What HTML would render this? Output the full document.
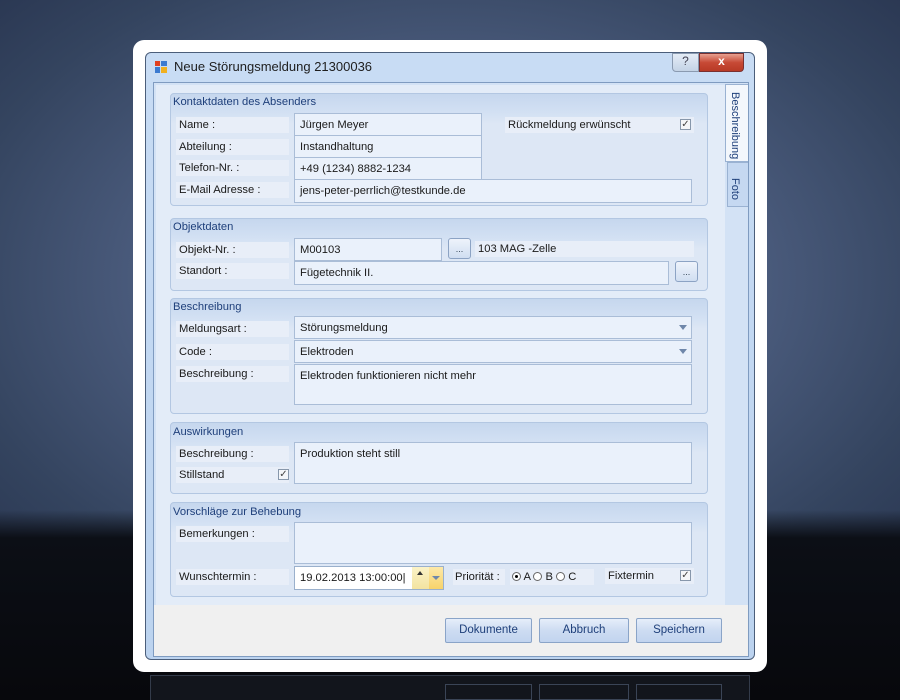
<!DOCTYPE html>
<html><head><meta charset="utf-8"><style>
*{box-sizing:border-box;margin:0;padding:0}
body{width:900px;height:700px;overflow:hidden;position:relative;font-family:"Liberation Sans","DejaVu Sans",sans-serif;font-size:11.2px;color:#1a1a1a;
background:radial-gradient(ellipse 70% 60% at 50% 40%,#6f82a5 0%,#4d5e80 45%,#34445f 80%,#2a3752 100%)}
.floor{position:absolute;left:0;top:510px;width:900px;height:190px;background:linear-gradient(rgba(20,26,38,0),#0c0f16 28px,#07080c)}
.a{position:absolute}
.card{left:133px;top:40px;width:634px;height:632px;background:#fff;border-radius:11px}
.win{left:145px;top:52px;width:610px;height:608px;background:linear-gradient(#c8dcf4,#bcd3ef);border:1px solid #4b5e7a;border-radius:6px}
.title{left:174px;top:59px;font-size:13px;color:#1e1e1e}
.client{left:153px;top:82px;width:596px;height:575px;border:1px solid #7f9bc0;background:#f0f0f0}
.tabarea{left:154px;top:83px;width:594px;height:522px;background:#d3e2f5}
.content{left:156px;top:85px;width:569px;height:520px;background:#e3ecf8}
.grp{position:absolute;left:170px;width:538px;background:linear-gradient(#c6d7ee,#d2e0f3 18px,#dde7f5 30px);border:1px solid #b3c7e2;border-radius:4px}
.gt{position:absolute;left:173px;color:#1e3f7a;font-size:11.2px}
.lb{position:absolute;left:176px;width:113px;height:16px;background:#e8eef8;padding:2px 0 0 3px}
.f{position:absolute;background:#eaf1fb;border:1px solid #aabdd7;padding:5px 0 0 5px}
.fw{background:#fff}
.chk{position:absolute;width:11px;height:11px;border:1px solid #8797ab;background:#f4f6f9;font-size:10px;line-height:9px;text-align:center;color:#444}
.dd{position:absolute;right:4px;top:8px;width:0;height:0;border-left:4px solid transparent;border-right:4px solid transparent;border-top:5px solid #6f87aa}
.btn{position:absolute;top:618px;height:25px;border:1px solid #8aa4c8;border-radius:2px;background:linear-gradient(#e6eefa,#cddcf2 50%,#c2d4ef);color:#1e3f7a;font-size:11.5px;text-align:center;line-height:23px}
.sb{position:absolute;width:23px;height:21px;border:1px solid #8ca3c4;border-radius:3px;background:linear-gradient(#eef3fb,#d0def1);text-align:center;font-size:9px;line-height:20px;color:#345}
.rd{display:inline-block;width:9px;height:9px;border:1px solid #666;border-radius:50%;vertical-align:-1px;background:#fff;position:relative}
</style></head><body>
<div class="floor"></div>
<div class="a" style="left:150px;top:675px;width:600px;height:25px;border:1px solid #333b4a;border-bottom:none;background:#12151c"></div>
<div class="a" style="left:445px;top:684px;width:87px;height:16px;border:1px solid #3a4456"></div>
<div class="a" style="left:539px;top:684px;width:90px;height:16px;border:1px solid #3a4456"></div>
<div class="a" style="left:636px;top:684px;width:86px;height:16px;border:1px solid #3a4456"></div>
<div class="a card"></div>
<div class="a win"></div>
<div class="a" style="left:155px;top:61px;width:5px;height:5px;background:#e04020"></div>
<div class="a" style="left:161px;top:61px;width:6px;height:5px;background:#3b7ad0"></div>
<div class="a" style="left:155px;top:67px;width:5px;height:6px;background:#3b7ad0"></div>
<div class="a" style="left:161px;top:67px;width:6px;height:6px;background:#f0b020"></div>
<div class="a title">Neue Störungsmeldung 21300036</div>
<div class="a" style="left:672px;top:53px;width:27px;height:19px;border:1px solid #8a9ab0;border-radius:0 0 0 4px;background:linear-gradient(#e4ecf6,#c4d3e6);text-align:center;font-size:12px;color:#445">?</div>
<div class="a" style="left:699px;top:53px;width:45px;height:19px;border:1px solid #7a3030;border-radius:0 0 4px 0;background:linear-gradient(#e8a090,#c74a36 50%,#b83a26);text-align:center;font-size:12px;font-weight:bold;color:#fff">x</div>
<div class="a client"></div>
<div class="a tabarea"></div>
<div class="a content"></div>
<div class="a" style="left:725px;top:84px;width:23px;height:78px;background:#f3f7fc;border:1px solid #9ab2d2;border-right:none"></div>
<div class="a" style="left:727px;top:162px;width:21px;height:45px;background:#c5d8f1;border:1px solid #9ab2d2;border-right:none"></div>
<div class="a" style="left:729px;top:92px;writing-mode:vertical-rl;color:#1e3f7a;font-size:11px">Beschreibung</div>
<div class="a" style="left:729px;top:178px;writing-mode:vertical-rl;color:#1e3f7a;font-size:11px">Foto</div>

<div class="grp" style="top:93px;height:113px"></div>
<div class="gt" style="top:96px">Kontaktdaten des Absenders</div>
<div class="lb" style="top:117px">Name :</div>
<div class="lb" style="top:139px">Abteilung :</div>
<div class="lb" style="top:160px">Telefon-Nr. :</div>
<div class="lb" style="top:182px">E-Mail Adresse :</div>
<div class="f" style="left:294px;top:113px;width:188px;height:23px">Jürgen Meyer</div>
<div class="f" style="left:294px;top:135px;width:188px;height:23px">Instandhaltung</div>
<div class="f" style="left:294px;top:157px;width:188px;height:23px">+49 (1234) 8882-1234</div>
<div class="f" style="left:294px;top:179px;width:398px;height:24px">jens-peter-perrlich@testkunde.de</div>
<div class="lb" style="left:505px;top:117px;width:189px">Rückmeldung erwünscht</div>
<div class="chk" style="left:680px;top:119px">✓</div>

<div class="grp" style="top:218px;height:73px"></div>
<div class="gt" style="top:221px">Objektdaten</div>
<div class="lb" style="top:242px">Objekt-Nr. :</div>
<div class="lb" style="top:263px">Standort :</div>
<div class="f" style="left:294px;top:238px;width:148px;height:23px">M00103</div>
<div class="sb" style="left:448px;top:238px">...</div>
<div class="lb" style="left:475px;top:241px;width:219px">103 MAG -Zelle</div>
<div class="f" style="left:294px;top:261px;width:375px;height:24px">Fügetechnik II.</div>
<div class="sb" style="left:675px;top:261px">...</div>

<div class="grp" style="top:298px;height:116px"></div>
<div class="gt" style="top:301px">Beschreibung</div>
<div class="lb" style="top:321px">Meldungsart :</div>
<div class="lb" style="top:344px">Code :</div>
<div class="lb" style="top:366px">Beschreibung :</div>
<div class="f" style="left:294px;top:316px;width:398px;height:23px">Störungsmeldung<span class="dd"></span></div>
<div class="f" style="left:294px;top:340px;width:398px;height:23px">Elektroden<span class="dd"></span></div>
<div class="f" style="left:294px;top:364px;width:398px;height:41px">Elektroden funktionieren nicht mehr</div>

<div class="grp" style="top:422px;height:72px"></div>
<div class="gt" style="top:426px">Auswirkungen</div>
<div class="lb" style="top:446px">Beschreibung :</div>
<div class="lb" style="top:467px">Stillstand</div>
<div class="chk" style="left:278px;top:469px">✓</div>
<div class="f" style="left:294px;top:442px;width:398px;height:42px">Produktion steht still</div>

<div class="grp" style="top:502px;height:95px"></div>
<div class="gt" style="top:506px">Vorschläge zur Behebung</div>
<div class="lb" style="top:526px">Bemerkungen :</div>
<div class="f" style="left:294px;top:522px;width:398px;height:42px"></div>
<div class="lb" style="top:569px">Wunschtermin :</div>
<div class="f fw" style="left:294px;top:566px;width:150px;height:24px;border-color:#9ab0cc">19.02.2013 13:00:00|</div>
<div class="a" style="left:412px;top:567px;width:17px;height:22px;background:linear-gradient(#fbf3c8,#f3e3a0)"></div>
<div class="a" style="left:429px;top:567px;width:14px;height:22px;background:linear-gradient(#fde9a8,#f7d36a)"></div>
<div class="a" style="left:417px;top:571px;border-left:3px solid transparent;border-right:3px solid transparent;border-bottom:4px solid #333"></div>
<div class="a" style="left:432px;top:576px;border-left:4px solid transparent;border-right:4px solid transparent;border-top:4px solid #6f87aa"></div>
<div class="lb" style="left:453px;top:569px;width:52px;padding-left:2px">Priorität :</div>
<div class="lb" style="left:510px;top:569px;width:84px;padding-left:2px"><span class="rd"><span style="position:absolute;left:2px;top:2px;width:3px;height:3px;background:#000;border-radius:50%"></span></span> A <span class="rd"></span> B <span class="rd"></span> C</div>
<div class="lb" style="left:605px;top:568px;width:89px;padding-left:3px">Fixtermin</div>
<div class="chk" style="left:680px;top:570px">✓</div>

<div class="btn" style="left:445px;width:87px">Dokumente</div>
<div class="btn" style="left:539px;width:90px">Abbruch</div>
<div class="btn" style="left:636px;width:86px">Speichern</div>
</body></html>
